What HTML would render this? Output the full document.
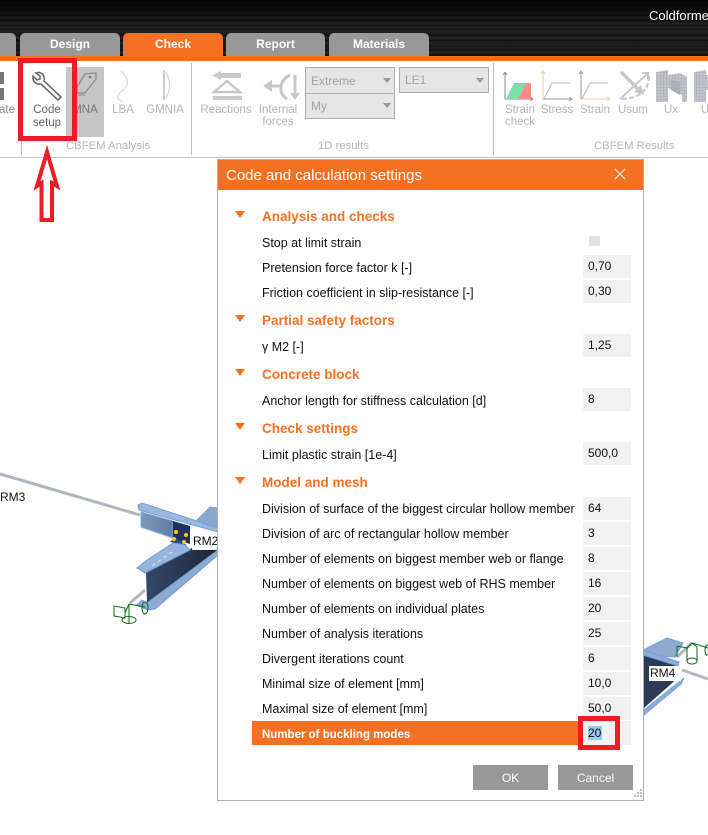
<!DOCTYPE html>
<html><head><meta charset="utf-8"><style>
html,body{margin:0;padding:0;background:#fff}
#p{position:relative;width:708px;height:835px;overflow:hidden;background:#fff;font-family:"Liberation Sans",sans-serif}
#p div{position:absolute;white-space:nowrap}
.top{left:0;top:0;width:708px;height:56px;background:linear-gradient(180deg,#060606 0,rgba(6,6,6,.75) 10px,rgba(6,6,6,.15) 24px,rgba(6,6,6,.2) 56px),repeating-linear-gradient(180deg,rgba(255,255,255,0) 0,rgba(255,255,255,0) 2px,rgba(255,255,255,.07) 3px,rgba(255,255,255,0) 4px,rgba(255,255,255,0) 7px),repeating-linear-gradient(180deg,#141414 0,#141414 1px,#2b2b2b 2px,#1a1a1a 3px,#262626 4px,#121212 5px)}
.tab{top:33px;height:23px;background:#989898;color:#fff;font-weight:bold;font-size:12px;line-height:23px;text-align:center;border-radius:5px 5px 0 0}
.rb{color:#b4b4b4;font-size:11.5px;line-height:12px;text-align:center}
.grp{color:#b4b4b4;font-size:11.3px;line-height:14px;top:139px}
.vl{width:1px;background:#bdbdbd;top:63px;height:92px}
.sel{background:#e6e6e6;border:1px solid #adadad;box-sizing:border-box;color:#a4a4a4;font-size:12px;padding-left:5px}
.h{left:262px;color:#f47124;font-weight:bold;font-size:13.5px;line-height:16px}
.l{left:262px;color:#111;font-size:12.5px;line-height:16px}
.i{left:583px;width:48px;height:23px;background:#f1f1f1;color:#111;font-size:12px;line-height:23px;text-indent:5px}
.t{left:235px;width:0;height:0;border-left:5.5px solid transparent;border-right:5.5px solid transparent;border-top:7px solid #f47124}
.btn{top:765px;width:75px;height:25px;background:#989898;color:#fff;font-size:12px;line-height:26px;text-align:center}
.red{border:5px solid #ed1c24;box-sizing:border-box}
</style></head><body><div id="p">
<div class="top"></div>
<div style="left:649px;top:8px;color:#fff;font-size:13px;line-height:16px">Coldforme</div>
<div class="tab" style="left:-20px;width:36px"></div>
<div class="tab" style="left:20px;width:100px;">Design</div>
<div class="tab" style="left:123px;width:100px;background:#f47124">Check</div>
<div class="tab" style="left:226px;width:99px">Report</div>
<div class="tab" style="left:329px;width:100px">Materials</div>
<div style="left:0;top:56px;width:708px;height:5px;background:#f47124"></div>
<div style="left:0;top:157px;width:708px;height:1px;background:#c4c4c4"></div>

<div style="left:66px;top:67px;width:38px;height:70px;background:#c6c6c6"></div>
<svg style="position:absolute;left:0;top:60px" width="708" height="70" viewBox="0 60 708 70" fill="none">
<defs><pattern id="m" width="3" height="3" patternUnits="userSpaceOnUse"><rect width="3" height="3" fill="#c3c3cc"/><path d="M0 0H3M0 0V3" stroke="#a5a5b0" stroke-width=".7"/></pattern></defs>
<rect x="-3" y="72" width="7" height="12" fill="#777"/><rect x="-3" y="88" width="7" height="12" fill="#777"/>
<path d="M36 73 C41 71 45 75 44 81 L61 97 L58 100 L41 84 C36 85 32 81 33 76 L37 80 L40 79 L40 76 Z" stroke="#6e6e6e" stroke-width="1.6"/>
<path d="M85 74 L96 73 V79 L85 93 H77 V87 Z" stroke="#8c8c8c" stroke-width="1.3"/><path d="M78 95H85" stroke="#888"/><circle cx="90" cy="77" r="1.3" fill="#777"/>
<path d="M121 71 C131 80 128 86 122 91 C115 97 118 100 123 102" stroke="#d6d6d6" stroke-width="1.2"/>
<path d="M164 70V100" stroke="#aaa" stroke-width="1.2"/><path d="M166 72 C171 82 171 90 165 99" stroke="#ccc"/>
<path d="M212 75.5 L221 71V80Z M220 73H241V78H220Z" fill="#c8c8c8"/>
<path d="M214 92 L227 81 L240 92Z" stroke="#c8c8c8" stroke-width="2.4"/><rect x="213" y="96" width="29" height="4" fill="#c8c8c8"/>
<path d="M263 86 L272 80 V92Z" fill="#c8c8c8"/><path d="M271 86H282" stroke="#c8c8c8" stroke-width="3"/><path d="M290 75 C280 80 277 92 287 99" stroke="#c8c8c8" stroke-width="3"/><path d="M295 75V96" stroke="#c8c8c8" stroke-width="3"/><path d="M290 93H300L295 100Z" fill="#c8c8c8"/>
<path d="M505 72V99H533M505 72l-2 3M505 72l2 3M533 99l-3-2M533 99l-3 2" stroke="#8a8a8a"/>
<path d="M506 99 L514 83H526 L518 99Z" fill="#78e0a8"/><path d="M518 99 L526 83H531V99Z" fill="#ff8a8a"/>
<path d="M543 71V99" stroke="#fbc9a6"/><path d="M541 74l2-3 2 3" stroke="#fbc9a6"/><path d="M543 99H572M569 97l3 2-3 2" stroke="#999"/><path d="M544 99L552 83H570" stroke="#b5b5b5"/>
<path d="M581 71V99" stroke="#999"/><path d="M579 74l2-3 2 3" stroke="#999"/><path d="M581 99H610M607 97l3 2-3 2" stroke="#fbc9a6"/><path d="M582 99L590 83H608" stroke="#b5b5b5"/>
<path d="M621 72 L641 92" stroke="#c8c8c8" stroke-width="3.5"/><path d="M644 95 L634 92 L641 85Z" fill="#c8c8c8"/><path d="M620 99L648 73M642 73H648V79" stroke="#c8c8c8" stroke-width="2"/><path d="M649 76 C649 90 640 98 622 99" stroke="#c8c8c8" stroke-width="2" stroke-dasharray="5 2"/>
<path d="M656 72 L668 70V102H656Z" fill="url(#m)"/><path d="M668 75L680 73 L687 77V102H682V95L668 88Z" fill="url(#m)"/><path d="M671 80L680 82V95L671 90Z" fill="#adadb8"/>
<path d="M694 72 L706 70V102H694Z" fill="url(#m)"/><path d="M706 75H708V90H706Z" fill="url(#m)"/>
</svg>
<div class="rb" style="left:-16px;top:104px;width:46px;color:#8a8a8a">ate</div>
<div class="rb" style="left:22px;top:104px;width:50px;color:#666;line-height:12.5px">Code<br>setup</div>
<div class="rb" style="left:66px;top:104px;width:38px;color:#777">MNA</div>
<div class="rb" style="left:108px;top:104px;width:30px">LBA</div>
<div class="rb" style="left:142px;top:104px;width:46px">GMNIA</div>
<div class="rb" style="left:198px;top:104px;width:56px">Reactions</div>
<div class="rb" style="left:254px;top:104px;width:48px">Internal<br>forces</div>
<div class="rb" style="left:497px;top:104px;width:46px">Strain<br>check</div>
<div class="rb" style="left:535px;top:104px;width:44px">Stress</div>
<div class="rb" style="left:573px;top:104px;width:44px">Strain</div>
<div class="rb" style="left:611px;top:104px;width:44px">Usum</div>
<div class="rb" style="left:656px;top:104px;width:30px">Ux</div>
<div class="rb" style="left:695px;top:104px;width:20px">U</div>
<div class="sel" style="left:305px;top:67px;width:90px;height:27px;line-height:26px">Extreme</div>
<div class="sel" style="left:305px;top:93px;width:90px;height:26px;line-height:24px">My</div>
<div class="sel" style="left:399px;top:67px;width:90px;height:26px;line-height:24px">LE1</div>
<div style="left:383px;top:78px;border-left:4px solid transparent;border-right:4px solid transparent;border-top:5px solid #999"></div>
<div style="left:383px;top:103px;border-left:4px solid transparent;border-right:4px solid transparent;border-top:5px solid #999"></div>
<div style="left:476px;top:78px;border-left:4px solid transparent;border-right:4px solid transparent;border-top:5px solid #999"></div>
<div class="vl" style="left:21px;top:140px;height:15px"></div>
<div class="vl" style="left:191px"></div><div class="vl" style="left:493px"></div>
<div class="grp" style="left:66px">CBFEM Analysis</div>
<div class="grp" style="left:318px">1D results</div>
<div class="grp" style="left:594px">CBFEM Results</div>

<div class="red" style="left:18px;top:58px;width:59px;height:83px"></div>
<svg style="position:absolute;left:30px;top:145px" width="34" height="80" viewBox="30 145 34 80"><path d="M47 152 L57 186 L52 183 V220 H41.5 V183 L37 186 Z" fill="#fff" stroke="#ed1c24" stroke-width="4"/></svg>

<svg style="position:absolute;left:0;top:460px" width="218" height="180" viewBox="0 460 218 180">
<defs>
<linearGradient id="w" x1="0" x2="1"><stop offset="0" stop-color="#7f98b8"/><stop offset="1" stop-color="#5f7da3"/></linearGradient>
<linearGradient id="d" x1="0" x2="1"><stop offset="0" stop-color="#34486a"/><stop offset="1" stop-color="#1c2536"/></linearGradient>
</defs>
<path d="M0 474 L140 515" stroke="#b4b8bc" stroke-width="3"/>
<path d="M0 474 L140 515" stroke="#9fb4cc" stroke-width="1" stroke-dasharray="8 10"/>
<path d="M197 520 L210 507 L218 508 V528Z" fill="#8ba7cc" stroke="#7fa8e0"/>
<path d="M141 512 L173 521 V538 L141 527Z" fill="url(#w)" stroke="#7fa8e0"/>
<path d="M138 505 L142 503 L218 528 V532 L139 510Z" fill="#9bb8dd" stroke="#6f9fe0"/>
<path d="M173 521 L190 526 V544 L173 539Z" fill="#22325f"/>
<path d="M170 542 L175 537 L187 545 Z" fill="#2d4a8a"/>
<circle cx="176" cy="532" r="2" fill="#fc0"/><circle cx="186" cy="535" r="2" fill="#fc0"/><circle cx="174" cy="539" r="2" fill="#fc0"/><circle cx="184" cy="542" r="2" fill="#fc0"/>
<path d="M146 573 L190 549 L218 535 V552 L147 603Z" fill="url(#d)"/>
<path d="M137 568 L147 560 L173 543 L185 545 L190 550 L145 573Z" fill="#97b4da" stroke="#6f9fe0"/>
<path d="M152 566L172 552" stroke="#d8e6f7" stroke-dasharray="4 3"/>
<path d="M137 605 L142 600 L147 603 L218 550 V555 L155 609 L147 610Z" fill="#8daad0" stroke="#6f9fe0"/>
<path d="M145 590 L130 603" stroke="#b4b8bc" stroke-width="3"/>
<g fill="none" stroke="#0b6a16" stroke-width="1"><path d="M114 606 L125 608 V618 L114 616Z"/><ellipse cx="129" cy="620" rx="7" ry="3.5"/><ellipse cx="145" cy="608" rx="3" ry="6"/><path d="M129 604V623M129 604L145 607M125 613L129 604"/></g>
</svg>
<div style="left:192px;top:533px;width:26px;height:17px;background:#fff;color:#111;font-size:12px;line-height:17px;text-indent:1px">RM2</div>
<div style="left:0;top:489px;color:#111;font-size:12px;line-height:16px">RM3</div>

<svg style="position:absolute;left:644px;top:630px" width="64" height="90" viewBox="644 630 64 90" fill="none">
<path d="M644 655 L680 667 V676 L644 708Z" fill="#2b3a55"/>
<path d="M643 650 L667 638 L683 643 L675 657 L643 655Z" fill="#8faace" stroke="#6f9fe0"/>
<path d="M643 650 L679 662 L678 666 L643 655Z" fill="#90aed4" stroke="#6f9fe0"/>
<path d="M684 678 L644 710 V715 L681 684Z" fill="#90aed4" stroke="#6f9fe0"/>
<path d="M677 657 L692 643" stroke="#b4b8bc" stroke-width="3"/>
<path d="M682 670 L708 679" stroke="#b4b8bc" stroke-width="3"/>
<g stroke="#0b6a16"><path d="M692 643 L687 648V661M692 643 L697 647V661M692 643 L708 648M677 646V657M677 646L687 648"/><ellipse cx="692" cy="661" rx="5" ry="3"/><ellipse cx="707" cy="650" rx="2" ry="5"/></g>
</svg>
<div style="left:649px;top:666px;width:32px;height:15px;background:#fff;color:#111;font-size:12px;line-height:15px;text-indent:1px">RM4</div>

<div style="left:217px;top:159px;width:425px;height:640px;border:1px solid #b0b0b0;background:#fff"></div>
<div style="left:218px;top:160px;width:425px;height:30px;background:#f47124;color:#fff;font-size:15px;line-height:31px;text-indent:8px">Code and calculation settings</div>
<svg style="position:absolute;left:614px;top:168px" width="12" height="12"><path d="M1 1L11 11M11 1L1 11" stroke="#fff" stroke-width="1"/></svg>

<div class="t" style="top:211px"></div><div class="h" style="top:209px">Analysis and checks</div>
<div class="l" style="top:235px">Stop at limit strain</div>
<div style="left:589px;top:236px;width:11px;height:10px;background:#e2e2e2;border-radius:2px"></div>
<div class="l" style="top:260px">Pretension force factor k [-]</div><div class="i" style="top:255px">0,70</div>
<div class="l" style="top:285px">Friction coefficient in slip-resistance [-]</div><div class="i" style="top:280px">0,30</div>
<div class="t" style="top:315px"></div><div class="h" style="top:313px">Partial safety factors</div>
<div class="l" style="top:339px">γ M2 [-]</div><div class="i" style="top:334px">1,25</div>
<div class="t" style="top:369px"></div><div class="h" style="top:367px">Concrete block</div>
<div class="l" style="top:393px">Anchor length for stiffness calculation [d]</div><div class="i" style="top:388px">8</div>
<div class="t" style="top:423px"></div><div class="h" style="top:421px">Check settings</div>
<div class="l" style="top:447px">Limit plastic strain [1e-4]</div><div class="i" style="top:442px">500,0</div>
<div class="t" style="top:477px"></div><div class="h" style="top:475px">Model and mesh</div>
<div class="l" style="top:501px">Division of surface of the biggest circular hollow member</div><div class="i" style="top:497px">64</div>
<div class="l" style="top:526px">Division of arc of rectangular hollow member</div><div class="i" style="top:522px">3</div>
<div class="l" style="top:551px">Number of elements on biggest member web or flange</div><div class="i" style="top:547px">8</div>
<div class="l" style="top:576px">Number of elements on biggest web of RHS member</div><div class="i" style="top:572px">16</div>
<div class="l" style="top:601px">Number of elements on individual plates</div><div class="i" style="top:597px">20</div>
<div class="l" style="top:626px">Number of analysis iterations</div><div class="i" style="top:622px">25</div>
<div class="l" style="top:651px">Divergent iterations count</div><div class="i" style="top:647px">6</div>
<div class="l" style="top:676px">Minimal size of element [mm]</div><div class="i" style="top:672px">10,0</div>
<div class="l" style="top:701px">Maximal size of element [mm]</div><div class="i" style="top:697px">50,0</div>
<div style="left:252px;top:721px;width:331px;height:24px;background:#f47124"></div>
<div class="l" style="top:727px;color:#fff;font-weight:bold;font-size:11.5px">Number of buckling modes</div>
<div class="i" style="top:721px;height:24px">&nbsp;</div>
<div style="left:588px;top:726px;width:14px;height:14px;background:#99c9ef"></div>
<div style="left:588px;top:725px;color:#111;font-size:12px;line-height:16px">20</div>
<div class="red" style="left:578px;top:716px;width:42px;height:34px"></div>
<div class="btn" style="left:473px">OK</div>
<div class="btn" style="left:558px">Cancel</div>
<svg style="position:absolute;left:631px;top:788px" width="12" height="12" fill="#bbb"><rect x="9" y="1" width="2" height="2"/><rect x="6" y="4" width="2" height="2"/><rect x="9" y="4" width="2" height="2"/><rect x="3" y="7" width="2" height="2"/><rect x="6" y="7" width="2" height="2"/><rect x="9" y="7" width="2" height="2"/></svg>
</div></body></html>
